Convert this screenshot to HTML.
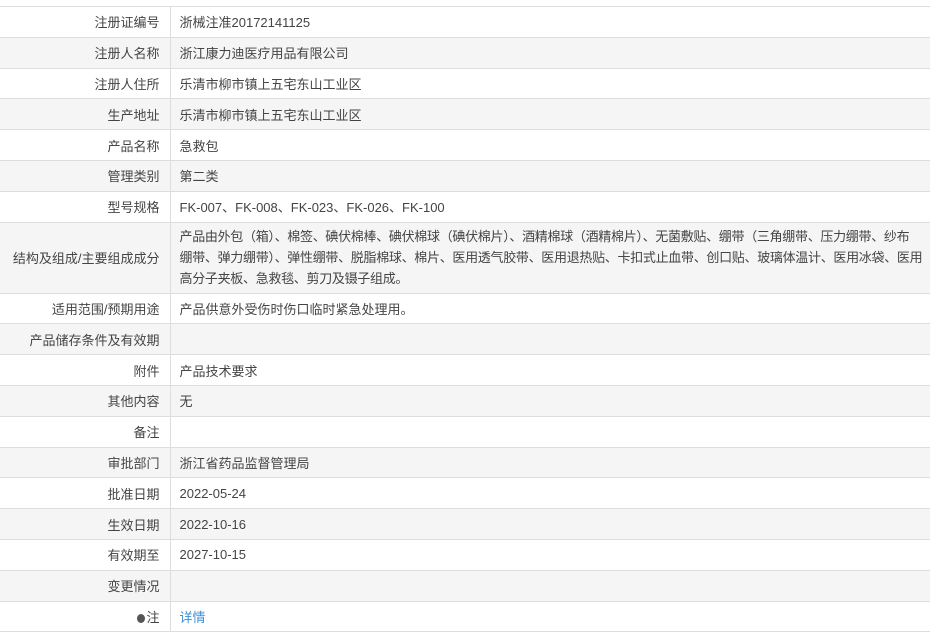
<!DOCTYPE html>
<html><head><meta charset="utf-8"><style>
body{margin:0;background:#fff;font-family:"Liberation Sans","Noto Sans CJK SC",sans-serif;font-size:13px;color:#444;}
table{position:absolute;top:6px;left:0;width:930px;border-collapse:collapse;table-layout:fixed;}
td{border-top:1px solid #ddd;border-bottom:1px solid #ddd;height:29.8px;padding:0;vertical-align:middle;overflow:hidden;}
td.l{width:170px;box-sizing:border-box;text-align:right;padding-right:10px;border-right:1px solid #ddd;white-space:nowrap;}
td.v{padding-left:9px;}
tr:nth-child(even) td{background:#f5f5f5;}
.t td{height:70px;}
.t td.v{line-height:21px;letter-spacing:-0.3px;}
a{color:#3b8fd6;text-decoration:none;}
.dot{display:inline-block;width:8px;height:9px;border-radius:50%;background:#555;vertical-align:-1px;margin-right:1px;}
</style></head><body>
<table>
<tr><td class="l">注册证编号</td><td class="v">浙械注准20172141125</td></tr>
<tr><td class="l">注册人名称</td><td class="v">浙江康力迪医疗用品有限公司</td></tr>
<tr><td class="l">注册人住所</td><td class="v">乐清市柳市镇上五宅东山工业区</td></tr>
<tr><td class="l">生产地址</td><td class="v">乐清市柳市镇上五宅东山工业区</td></tr>
<tr><td class="l">产品名称</td><td class="v">急救包</td></tr>
<tr><td class="l">管理类别</td><td class="v">第二类</td></tr>
<tr><td class="l">型号规格</td><td class="v">FK-007、FK-008、FK-023、FK-026、FK-100</td></tr>
<tr class="t"><td class="l">结构及组成/主要组成成分</td><td class="v" style="white-space:nowrap">产品由外包（箱）、棉签、碘伏棉棒、碘伏棉球（碘伏棉片）、酒精棉球（酒精棉片）、无菌敷贴、绷带（三角绷带、压力绷带、纱布<br>绷带、弹力绷带）、弹性绷带、脱脂棉球、棉片、医用透气胶带、医用退热贴、卡扣式止血带、创口贴、玻璃体温计、医用冰袋、医用<br>高分子夹板、急救毯、剪刀及镊子组成。</td></tr>
<tr><td class="l">适用范围/预期用途</td><td class="v">产品供意外受伤时伤口临时紧急处理用。</td></tr>
<tr><td class="l">产品储存条件及有效期</td><td class="v"></td></tr>
<tr><td class="l">附件</td><td class="v">产品技术要求</td></tr>
<tr><td class="l">其他内容</td><td class="v">无</td></tr>
<tr><td class="l">备注</td><td class="v"></td></tr>
<tr><td class="l">审批部门</td><td class="v">浙江省药品监督管理局</td></tr>
<tr><td class="l">批准日期</td><td class="v">2022-05-24</td></tr>
<tr><td class="l">生效日期</td><td class="v">2022-10-16</td></tr>
<tr><td class="l">有效期至</td><td class="v">2027-10-15</td></tr>
<tr><td class="l">变更情况</td><td class="v"></td></tr>
<tr><td class="l"><span class="dot"></span>注</td><td class="v"><a>详情</a></td></tr>
</table>
</body></html>
